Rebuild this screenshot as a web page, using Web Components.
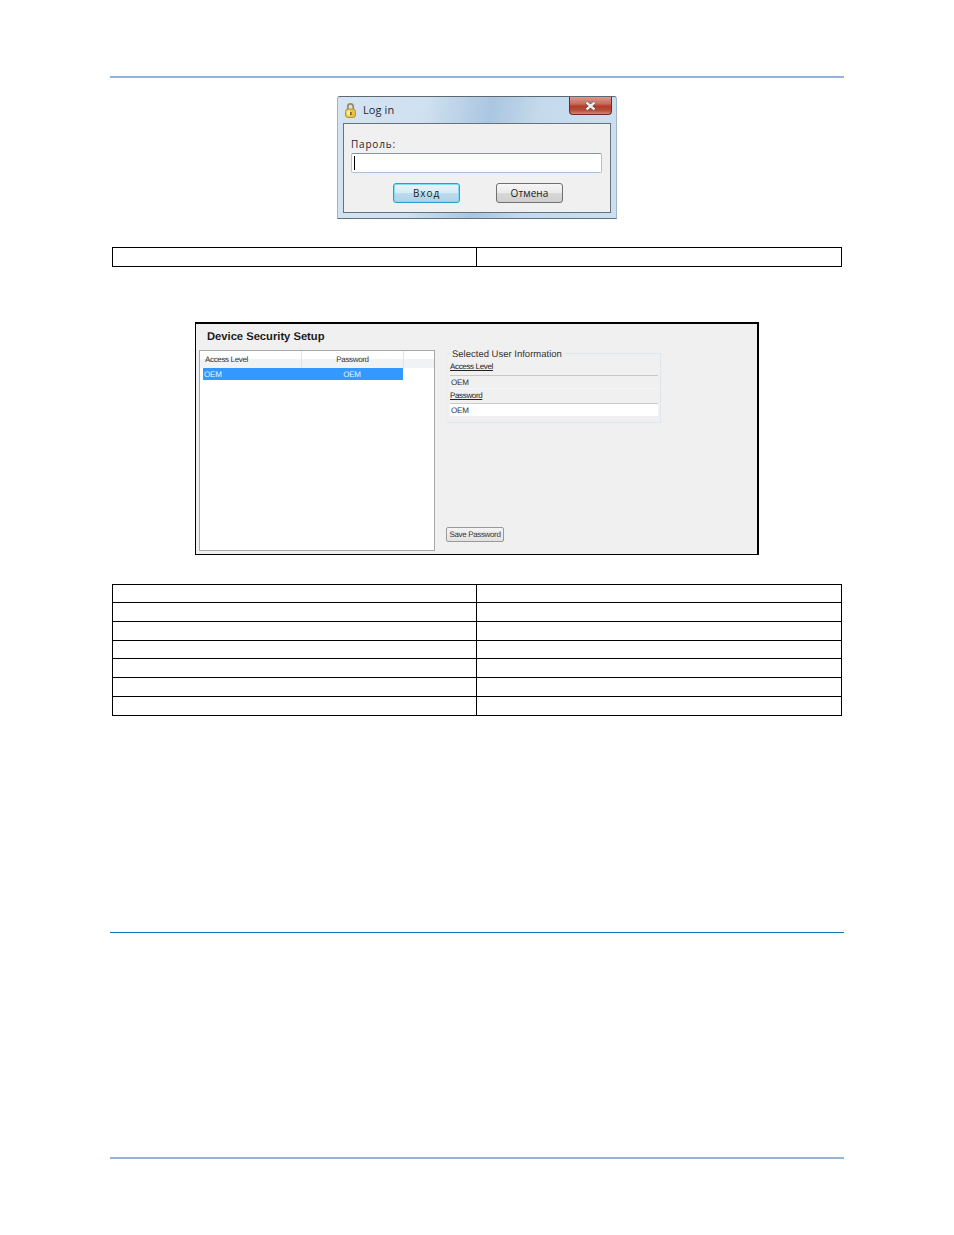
<!DOCTYPE html>
<html>
<head>
<meta charset="utf-8">
<title>Device Security</title>
<style>
  html, body { margin: 0; background: #fff; }
  body { font-family: "Liberation Sans", Arial, sans-serif; }
  doc-page { height: 1235px; }
</style>
</head>
<body>
<doc-page>
  <login-dialog></login-dialog>
  <blank-table rows="19"></blank-table>
  <security-setup></security-setup>
  <blank-table rows="18 19 19 18 19 19 19"></blank-table>
</doc-page>

<script>
/**
 * DocPage - page frame with the header, middle and footer rules
 */
class DocPage extends HTMLElement {
  constructor() {
    super();
    this.attachShadow({ mode: 'open' });
    this.shadowRoot.innerHTML = `
      <style>
        :host { display: flex; flex-direction: column; padding: 76px 110px 0; box-sizing: border-box; }
        .rule { height: 2px; flex: none; }
        .head { background: #95b3d7; margin-bottom: 18px; }
        .content { display: flex; flex-direction: column; height: 836px; flex: none; }
        .mid { background: #0f75bd; height: 1px; }
        .foot { background: #95b3d7; margin-top: 224px; }
      </style>
      <div class="rule head"></div>
      <div class="content"><slot></slot></div>
      <div class="rule mid"></div>
      <div class="rule foot"></div>
    `;
  }
}

/**
 * LoginDialog - Windows 7 style password prompt
 */
class LoginDialog extends HTMLElement {
  constructor() {
    super();
    this.attachShadow({ mode: 'open' });
    this.shadowRoot.innerHTML = `
      <style>
        :host {
          display: flex; flex-direction: column; flex: none; box-sizing: border-box;
          width: 280px; height: 123px; align-self: center;
          border: 1px solid #9db4ca; border-top-color: #5d6873; border-bottom-color: #5f7184; border-radius: 3px 3px 0 0;
          background: linear-gradient(100deg, #d5e4f2 0%, #cfe0f0 30%, #aac6e0 52%, #c4d9ec 68%, #cde0f1 100%);
          padding: 0 5px 5px 5px;
          font-family: "Open Sans", sans-serif;
          color: #222;
        }
        .caption { display: flex; align-items: flex-start; height: 26px; flex: none; }
        .caption svg { margin: 5px 0 0 1px; flex: none; }
        .caption span { font-size: 11px; margin: 5px 0 0 6px; color: #1c2a38; letter-spacing: .1px; }
        .close {
          margin-left: auto; width: 43px; height: 18px; box-sizing: border-box; margin-right: -1px;
          border: 1px solid #6b2a22; border-top: 0; border-radius: 0 0 4px 4px;
          background: linear-gradient(#dc9a90 0%, #c96a5c 40%, #b03c2c 55%, #b8503c 80%, #d08a76 100%);
          display: flex; align-items: center; justify-content: center;
        }
        .close svg { margin: 0; }
        .panel {
          flex: 1; border: 1px solid #66727e; background: #f0f0f0;
          padding: 13px 8px 0 7px; display: flex; flex-direction: column;
        }
        label { font-size: 10px; line-height: 14px; letter-spacing: .8px; color: #2a1a2a; }
        .input {
          height: 20px; box-sizing: border-box; margin-top: 2px;
          border: 1px solid #a9c3da; border-top-color: #7d99b0; border-radius: 2px; background: #fff;
          padding: 2px;
        }
        .input i { display: block; width: 1px; height: 14px; background: #000; }
        .buttons { display: flex; gap: 36px; margin-top: 10px; margin-left: 42px; }
        .btn {
          width: 67px; height: 20px; box-sizing: border-box; border-radius: 3px;
          border: 1px solid #707070;
          background: linear-gradient(#f6f6f6 0%, #ebebeb 48%, #d8d8d8 52%, #cfcfcf 100%);
          font-size: 10px; letter-spacing: .1px; text-align: center; line-height: 18px; color: #222;
        }
        .btn.default {
          border: 1px solid #2f9fc8; box-shadow: inset 0 0 0 1px #7fdcf5; letter-spacing: .9px;
          background: linear-gradient(#e8f4fa 0%, #d8ecf6 48%, #bcdcec 52%, #aed2e6 100%);
        }
      </style>
      <div class="caption">
        <svg width="13" height="16" viewBox="0 0 13 16">
          <path d="M3.8 8V4.5a2.7 2.7 0 0 1 5.4 0V8" fill="none" stroke="#9a8c64" stroke-width="1.8"/>
          <rect x="1.5" y="7" width="10" height="8.5" rx="2.5" fill="#e8c244" stroke="#b8952f"/>
          <rect x="3" y="8.5" width="3.5" height="5" rx="1" fill="#f8eaa0"/>
          <rect x="6" y="10" width="1.6" height="3" fill="#7a5e18"/>
        </svg>
        <span>Log in</span>
        <div class="close">
          <svg width="13" height="10" viewBox="0 0 13 10">
            <path d="M2.5 1.5l8 7M10.5 1.5l-8 7" stroke="#4a3a3a" stroke-width="3.6"/>
            <path d="M2.5 1.5l8 7M10.5 1.5l-8 7" stroke="#f0eeee" stroke-width="2.4"/>
          </svg>
        </div>
      </div>
      <div class="panel">
        <label>Пароль:</label>
        <div class="input"><i></i></div>
        <div class="buttons">
          <div class="btn default">Вход</div>
          <div class="btn">Отмена</div>
        </div>
      </div>
    `;
  }
}

/**
 * BlankTable - empty two column table, one row per height in the rows attribute
 */
class BlankTable extends HTMLElement {
  constructor() {
    super();
    this.attachShadow({ mode: 'open' });
  }

  connectedCallback() {
    const rows = (this.getAttribute('rows') || '19').split(' ');
    const cells = rows.map((h) => `<div class="row" style="height:${h - 1}px"><div class="cell"></div><div class="cell"></div></div>`).join('');
    this.shadowRoot.innerHTML = `
      <style>
        :host { display: block; flex: none; margin: 0 2px; border-top: 1px solid #000; border-left: 1px solid #000; }
        .row { display: grid; grid-template-columns: 364px 365px; border-bottom: 1px solid #000; }
        .cell { border-right: 1px solid #000; }
      </style>
      ${cells}
    `;
  }
}

/**
 * SecuritySetup - screenshot of the Device Security Setup panel
 */
class SecuritySetup extends HTMLElement {
  constructor() {
    super();
    this.attachShadow({ mode: 'open' });
    this.shadowRoot.innerHTML = `
      <style>
        :host {
          display: flex; flex-direction: column; flex: none; box-sizing: border-box;
          width: 564px; height: 233px; align-self: center;
          border: 1px solid #000; border-top-width: 2px; border-right-width: 2px; background: #f0f0f0;
          font-family: "Liberation Sans", Arial, sans-serif; color: #222;
          text-rendering: geometricPrecision;
        }
        h1 { margin: 6px 0 0 11px; font-size: 11.2px; line-height: 15px; font-weight: bold; color: #1a1a1a; flex: none; }
        .body { flex: 1; display: flex; padding: 5px 0 3px 3px; min-height: 0; }
        .list { width: 236px; box-sizing: border-box; border: 1px solid #a8a8a8; background: #fff; flex: none; }
        .cols {
          display: grid; grid-template-columns: 102px 102px 1fr; height: 17px;
          background: linear-gradient(#fff 0%, #fff 45%, #f1f2f4 50%, #f1f2f4 100%);
          font-size: 8px; letter-spacing: -.35px; line-height: 17px; color: #333;
        }
        .cols div { border-right: 1px solid #dfe2e6; padding-left: 5px; }
        .cols div + div { text-align: center; padding: 0; }
        .cols div:last-child { border: 0; }
        .sel {
          display: grid; grid-template-columns: 98px 102px; width: 200px; margin-left: 3px; height: 12px;
          background: #3399ff; color: #eaf4ff; font-size: 8px; letter-spacing: -.2px; line-height: 13px;
        }
        .sel div { padding-left: 1px; }
        .sel div + div { text-align: center; padding: 0; }
        .side { flex: 1; padding: 3px 0 0 11px; display: flex; flex-direction: column; }
        .group { width: 215px; height: 70px; box-sizing: border-box; flex: none; border: 1px solid #dfe6ec; border-left-color: #eaecee; padding: 0 2px 0 3px; }
        .legend {
          display: block; width: max-content; margin: -5px 0 0 1px; padding: 0 2px 0 1px;
          background: #f0f0f0; font-size: 9.5px; line-height: 11px; color: #333;
        }
        .lbl { font-size: 8px; letter-spacing: -.35px; line-height: 9px; text-decoration: underline; color: #222; margin-top: 2px; }
        .ro { height: 14px; margin-top: 4px; border-top: 1px solid #c8c8c8; border-bottom: 1px solid #f6f6f6; font-size: 8px; letter-spacing: -.2px; line-height: 13px; padding-left: 1px; color: #333; box-sizing: border-box; }
        .pw { height: 13px; margin: 3px 0 0 0; width: 208px; box-sizing: border-box; background: #fff; border-top: 1px solid #ccc; font-size: 8px; letter-spacing: -.2px; line-height: 14px; padding-left: 1px; color: #333; }
        .lbl.second { margin-top: 2px; }
        .save {
          margin-top: auto; margin-bottom: 9px; width: 58px; height: 15px; box-sizing: border-box;
          border: 1px solid #999; border-radius: 2px; background: linear-gradient(#f4f4f4, #e2e2e2);
          font-size: 8px; letter-spacing: -.35px; line-height: 13px; text-align: center; color: #333; white-space: nowrap;
        }
      </style>
      <h1>Device Security Setup</h1>
      <div class="body">
        <div class="list">
          <div class="cols"><div>Access Level</div><div>Password</div><div></div></div>
          <div class="sel"><div>OEM</div><div>OEM</div></div>
        </div>
        <div class="side">
          <div class="group">
            <span class="legend">Selected User Information</span>
            <div class="lbl">Access Level</div>
            <div class="ro">OEM</div>
            <div class="lbl second">Password</div>
            <div class="pw">OEM</div>
          </div>
          <div class="save">Save Password</div>
        </div>
      </div>
    `;
  }
}

customElements.define('doc-page', DocPage);
customElements.define('login-dialog', LoginDialog);
customElements.define('blank-table', BlankTable);
customElements.define('security-setup', SecuritySetup);

// spacing between the stacked blocks
document.querySelectorAll('blank-table')[0].style.marginTop = '28px';
document.querySelector('security-setup').style.marginTop = '55px';
document.querySelectorAll('blank-table')[1].style.marginTop = '29px';
</script>
</body>
</html>
